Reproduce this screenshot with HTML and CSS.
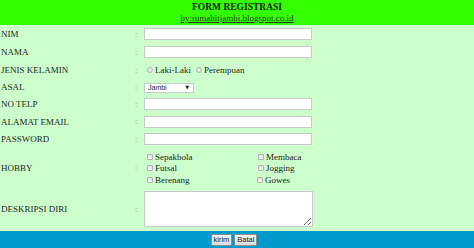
FILE: index.html
```html
<!DOCTYPE html>
<html lang="id">
<head>
<meta charset="utf-8">
<title>Form Registrasi</title>
<link rel="stylesheet" href="styles.css">
</head>
<body>
<div class="page">
  <header class="head">
    <div class="title">FORM REGISTRASI</div>
    <a class="sub" href="#">by:rumahitjambi.blogspot.co.id</a>
  </header>
  <form class="form">
    <div class="row r18"><span class="lbl">NIM</span><span class="colon">:</span><input class="txt" type="text"></div>
    <div class="row r18"><span class="lbl">NAMA</span><span class="colon">:</span><input class="txt" type="text"></div>
    <div class="row r18"><span class="lbl">JENIS KELAMIN</span><span class="colon">:</span>
      <label class="opt"><input class="rad" type="radio" name="jk">Laki-Laki</label>
      <label class="opt"><input class="rad" type="radio" name="jk">Perempuan</label>
    </div>
    <div class="row r16"><span class="lbl">ASAL</span><span class="colon">:</span>
      <span class="selwrap"><select class="sel"><option>Jambi</option></select></span>
    </div>
    <div class="row r18"><span class="lbl">NO TELP</span><span class="colon">:</span><input class="txt" type="text"></div>
    <div class="row r17"><span class="lbl">ALAMAT EMAIL</span><span class="colon">:</span><input class="txt" type="text"></div>
    <div class="row r18"><span class="lbl">PASSWORD</span><span class="colon">:</span><input class="txt" type="password"></div>
    <div class="row rhobby"><span class="lbl">HOBBY</span><span class="colon">:</span>
      <div class="hobbies">
        <label class="chk"><input class="box" type="checkbox">Sepakbola</label>
        <label class="chk"><input class="box" type="checkbox">Membaca</label>
        <label class="chk"><input class="box" type="checkbox">Futsal</label>
        <label class="chk"><input class="box" type="checkbox">Jogging</label>
        <label class="chk"><input class="box" type="checkbox">Berenang</label>
        <label class="chk shift"><input class="box" type="checkbox">Gowes</label>
      </div>
    </div>
    <div class="row rdesc"><span class="lbl">DESKRIPSI DIRI</span><span class="colon">:</span><textarea class="area"></textarea></div>
    <div class="foot">
      <button type="submit" class="btn">kirim</button>
      <button type="reset" class="btn">Batal</button>
    </div>
  </form>
</div>
</body>
</html>
```

FILE: styles.css
```css
* { box-sizing: border-box; }
html, body { margin: 0; padding: 0; }
body {
  background: #ccffcc;
  font-family: "Liberation Serif", "Times New Roman", serif;
  font-size: 9px;
  color: #1e1e1e;
  width: 474px;
  height: 248px;
  overflow: hidden;
}
.page { display: flex; flex-direction: column; }
.head {
  height: 25px;
  background: #33ff00;
  display: flex;
  flex-direction: column;
  align-items: center;
  padding-top: 2px;
}
.title { font-weight: bold; font-size: 9.5px; line-height: 11px; color: #1a1a1a; }
.sub { font-size: 9px; line-height: 10px; color: #2a3a2a; text-decoration: underline; }
.form { display: flex; flex-direction: column; margin: 0; }
.row { display: flex; align-items: center; }
.r18 { height: 18px; }
.r17 { height: 17px; }
.r16 { height: 16px; }
.rhobby { height: 39px; }
.rdesc { height: 44px; }
.lbl { width: 135px; padding-left: 1px; white-space: nowrap; }
.colon { width: 9px; color: #8a8a8a; font-size: 8px; }
.txt {
  width: 168px;
  height: 12px;
  border: 1px solid #c8c8c8;
  background: #fff;
  padding: 0;
  margin: 0;
  outline: none;
}
.opt { display: flex; align-items: center; margin-left: 3px; margin-right: 2px; }
.rad {
  appearance: none;
  -webkit-appearance: none;
  width: 6px;
  height: 6px;
  margin: 0 2px 0 0;
  border: 1px solid #b4b4b4;
  border-radius: 50%;
  background: radial-gradient(circle at 50% 40%, #f4f4f4, #d8d8d8);
}
.selwrap { position: relative; display: inline-block; }
.sel {
  appearance: none;
  -webkit-appearance: none;
  width: 50px;
  height: 10px;
  border: 1px solid #c8c8c8;
  background: #fff;
  font-family: "Liberation Sans", Arial, sans-serif;
  font-size: 7px;
  line-height: 8px;
  padding: 0 0 0 3px;
  margin: 0;
  color: #222;
}
.selwrap::after {
  content: "\25BC";
  position: absolute;
  right: 5px;
  top: 2px;
  font-family: "DejaVu Sans", sans-serif;
  font-size: 5px;
  line-height: 6px;
  color: #222;
  pointer-events: none;
}
.hobbies {
  display: grid;
  grid-template-columns: 111px 60px;
  grid-auto-rows: 11.5px;
  align-self: flex-start;
  padding-top: 3px;
  margin-left: 2px;
}
.chk { display: flex; align-items: center; white-space: nowrap; }
.chk.shift { margin-left: -1px; }
.box {
  appearance: none;
  -webkit-appearance: none;
  width: 6px;
  height: 6px;
  margin: 0 2px 0 1px;
  border: 1px solid #b0b0b0;
  border-radius: 1px;
  background: linear-gradient(#e4e4e4, #f6f6f6);
}
.area {
  width: 169px;
  height: 36px;
  border: 1px solid #c8c8c8;
  background: #fff;
  margin: 0;
  padding: 0;
  resize: both;
}
.foot {
  height: 17px;
  background: #0099cc;
  display: flex;
  justify-content: center;
  align-items: center;
  gap: 2px;
  padding-right: 6px;
}
.btn {
  font-family: "Liberation Sans", Arial, sans-serif;
  font-size: 7.5px;
  line-height: 10px;
  height: 12px;
  padding: 0 2px;
  margin: 0;
  border: 1px solid #8c8c8c;
  background: linear-gradient(#f4f4f4, #dcdcdc);
  color: #222;
  border-radius: 1px;
}
```
